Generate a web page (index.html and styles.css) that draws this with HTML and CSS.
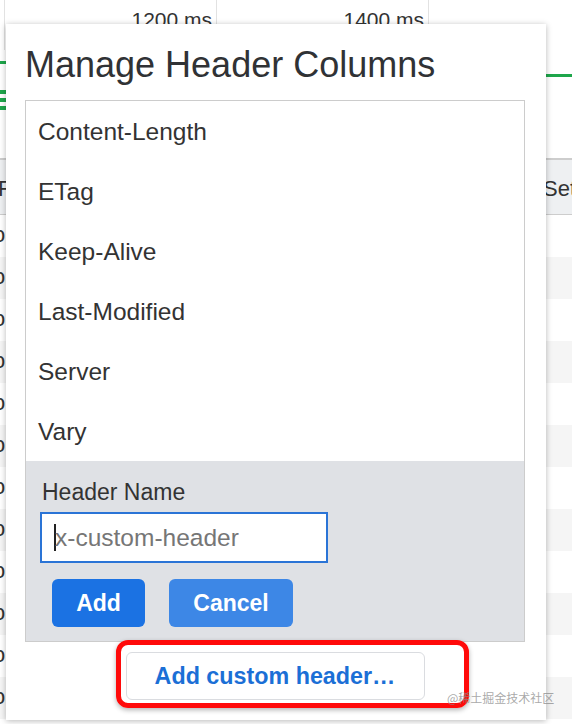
FILE: index.html
```html
<!DOCTYPE html>
<html>
<head>
<meta charset="utf-8">
<link rel="stylesheet" href="styles.css">
</head>
<body>
<div class="page">
  <div class="timeline">
    <div class="tick"><span>1200 ms</span></div>
    <div class="tick"><span>1400 ms</span></div>
    <div class="tick tick-last"></div>
  </div>
  <div class="waterfall">
    <span class="bar" style="left:0;top:11px;width:8px;height:3px"></span>
    <span class="bar" style="left:0;top:40px;width:8px;height:4px"></span>
    <span class="bar" style="left:0;top:48px;width:8px;height:4px"></span>
    <span class="bar" style="left:0;top:56px;width:8px;height:4px"></span>
    <span class="bar" style="left:540px;top:24px;width:40px;height:3px"></span>
  </div>
  <div class="thead">
    <span class="th-r">R</span>
    <span class="th-set">Set</span>
  </div>
  <div class="tbody">
    <div class="row"><span class="c1">o</span><span class="c2"></span><span class="c3"></span><span class="c4"></span></div>
    <div class="row alt"><span class="c1">o</span><span class="c2"></span><span class="c3"></span><span class="c4"></span></div>
    <div class="row"><span class="c1">o</span><span class="c2"></span><span class="c3"></span><span class="c4"></span></div>
    <div class="row alt"><span class="c1">o</span><span class="c2"></span><span class="c3"></span><span class="c4"></span></div>
    <div class="row"><span class="c1">o</span><span class="c2"></span><span class="c3"></span><span class="c4"></span></div>
    <div class="row alt"><span class="c1">o</span><span class="c2"></span><span class="c3"></span><span class="c4"></span></div>
    <div class="row"><span class="c1">o</span><span class="c2"></span><span class="c3"></span><span class="c4"></span></div>
    <div class="row alt"><span class="c1">o</span><span class="c2"></span><span class="c3"></span><span class="c4"></span></div>
    <div class="row"><span class="c1">o</span><span class="c2"></span><span class="c3"></span><span class="c4"></span></div>
    <div class="row alt"><span class="c1">o</span><span class="c2"></span><span class="c3"></span><span class="c4"></span></div>
    <div class="row"><span class="c1">o</span><span class="c2"></span><span class="c3"></span><span class="c4"></span></div>
    <div class="row alt"><span class="c1">o</span><span class="c2"></span><span class="c3"></span><span class="c4"></span></div>
  </div>

  <div class="modal">
    <h1 class="title">Manage Header Columns</h1>
    <div class="listbox">
      <ul class="list">
        <li>Content-Length</li>
        <li>ETag</li>
        <li>Keep-Alive</li>
        <li>Last-Modified</li>
        <li>Server</li>
        <li>Vary</li>
      </ul>
      <div class="form">
        <label class="label">Header Name</label>
        <div class="input"><span class="caret"></span><span class="placeholder">x-custom-header</span></div>
        <div class="actions">
          <button class="btn btn-add">Add</button>
          <button class="btn btn-cancel">Cancel</button>
        </div>
      </div>
    </div>
    <div class="footer">
      <button class="btn-custom">Add custom header…</button>
    </div>
  </div>

  <div class="highlight"></div>
  <div class="watermark">@稀土掘金技术社区</div>
</div>
</body>
</html>
```

FILE: styles.css
```css
* { box-sizing: border-box; }
html, body { margin: 0; padding: 0; }
body {
  font-family: "Liberation Sans", Arial, "Noto Sans CJK SC", sans-serif;
  color: #333;
  background: #fff;
}
.page {
  position: relative;
  width: 572px;
  height: 724px;
  overflow: hidden;
  background: #fff;
}

/* timeline */
.timeline {
  display: flex;
  height: 50px;
  margin-left: 4px;
  border-left: 1px solid #e2e2e2;
}
.tick {
  width: 212px;
  flex: none;
  border-right: 1px solid #e2e2e2;
  text-align: right;
  padding: 8px 4px 0 0;
  font-size: 21px;
  line-height: 24px;
  color: #333;
}
.tick-last { border-right: none; flex: 1; }

.waterfall {
  position: relative;
  height: 108px;
}
.bar {
  position: absolute;
  background: #1ea64b;
}

/* table header */
.thead {
  display: flex;
  align-items: center;
  height: 57px;
  border-top: 2px solid #cdcdcd;
  border-bottom: 1px solid #cdcdcd;
  background: #eef0f2;
  font-size: 22px;
  color: #333;
}
.th-r { width: 545px; margin-left: -2px; flex: none; padding-top: 4px; }
.th-set { flex: none; padding-top: 4px; }

/* table body */
.row {
  display: flex;
  height: 42px;
  align-items: center;
  background: #fff;
}
.row.alt { background: #f5f5f5; }
.row span { height: 100%; flex: none; }
.c1 {
  width: 33px;
  border-right: 1px solid #e2e2e2;
  font-size: 22px;
  line-height: 40px;
  text-indent: -7px;
  overflow: hidden;
}
.c2 { width: 150px; border-right: 1px solid #e2e2e2; }
.c3 { width: 187px; border-right: 1px solid #e2e2e2; }
.c4 { flex: 1 !important; }

/* modal */
.modal {
  position: absolute;
  left: 6px;
  top: 24px;
  width: 540px;
  height: 696px;
  background: #fff;
  box-shadow: 0 1px 6px rgba(0, 0, 0, 0.28);
  padding: 21px 21px 0 19px;
  display: flex;
  flex-direction: column;
}
.title {
  margin: 0 0 15px 0;
  font-size: 36px;
  line-height: 40px;
  font-weight: normal;
  color: #303235;
  white-space: nowrap;
}
.listbox {
  border: 1px solid #cccccc;
  background: #fff;
}
.list {
  list-style: none;
  margin: 0;
  padding: 0;
}
.list li {
  height: 60px;
  line-height: 61px;
  padding-left: 12px;
  font-size: 24.5px;
  color: #333;
}
.form {
  background: #dfe1e5;
  height: 180px;
  padding: 17px 0 0 14px;
  display: flex;
  flex-direction: column;
  align-items: flex-start;
}
.label {
  font-size: 23px;
  line-height: 28px;
  padding-left: 2px;
  color: #333;
}
.input {
  margin-top: 6px;
  width: 288px;
  height: 51px;
  border: 2px solid #2a74d6;
  background: #fff;
  display: flex;
  align-items: center;
  padding-left: 12px;
}
.caret {
  width: 2px;
  height: 27px;
  background: #222;
  flex: none;
  margin-right: -1px;
}
.placeholder {
  font-size: 24.5px;
  color: #767676;
}
.actions {
  display: flex;
  gap: 24px;
  margin-top: 16px;
  padding-left: 12px;
}
.btn {
  height: 48px;
  border: none;
  border-radius: 6px;
  color: #fff;
  font-family: "Liberation Sans", Arial, sans-serif;
  font-weight: bold;
  font-size: 23px;
  padding: 0;
}
.btn-add { width: 93px; background: #1b72e3; }
.btn-cancel { width: 124px; background: #3d87e6; }

.footer {
  display: flex;
  justify-content: center;
  padding-top: 10px;
}
.btn-custom {
  width: 299px;
  height: 48px;
  border: 1px solid #dadce0;
  border-radius: 6px;
  background: #fff;
  color: #1b6fd6;
  font-family: "Liberation Sans", Arial, sans-serif;
  font-weight: bold;
  font-size: 23.3px;
  padding: 0;
}

/* annotation overlay */
.highlight {
  position: absolute;
  left: 116px;
  top: 640px;
  width: 353px;
  height: 68px;
  border: 5px solid #ff0a0a;
  border-radius: 12px;
  box-shadow: 0 2px 5px rgba(0, 0, 0, 0.3);
}
.watermark {
  position: absolute;
  left: 447px;
  top: 690px;
  font-size: 12px;
  line-height: 16px;
  color: rgba(140, 140, 140, 0.75);
  font-family: "Noto Sans CJK SC", "Liberation Sans", sans-serif;
  white-space: nowrap;
}
```
